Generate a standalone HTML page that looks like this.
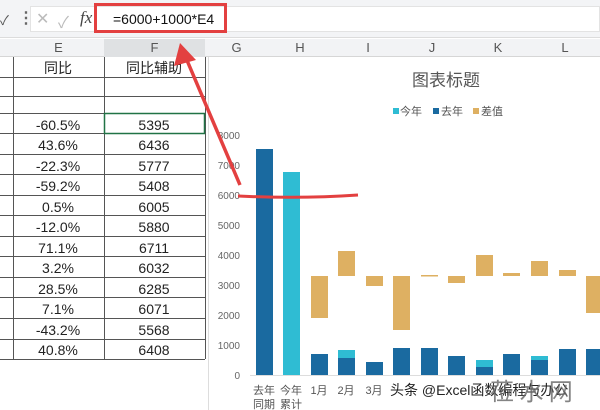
<!DOCTYPE html><html><head><meta charset="utf-8"><style>
*{margin:0;padding:0;box-sizing:border-box}
body{width:600px;height:410px;overflow:hidden;background:#fff;position:relative;font-family:"Liberation Sans","Noto Sans CJK SC",sans-serif}
.a{position:absolute}
.cell{position:absolute;text-align:center;font-size:14px;color:#222;line-height:20px}
</style></head><body>
<div class="a" style="left:0;top:0;width:600px;height:38px;background:#f3f4f6;border-bottom:1px solid #dcdcdc"></div>
<div class="a" style="left:30px;top:6px;width:570px;height:26px;background:#fff;border:1px solid #e3e3e3"></div>
<div class="a" style="left:0;top:10px;font-size:13px;color:#555">✓</div>
<div class="a" style="left:18px;top:8px;font-size:16px;color:#666;font-weight:bold">⋮</div>
<div class="a" style="left:36px;top:9px;font-size:16px;color:#bbb">✕</div>
<div class="a" style="left:58px;top:9px;font-size:16px;color:#bbb">✓</div>
<div class="a" style="left:80px;top:8px;font-size:17px;color:#444;font-style:italic;font-family:'Liberation Serif',serif">fx</div>
<div class="a" style="left:113px;top:11px;font-size:14px;color:#111">=6000+1000*E4</div>
<div class="a" style="left:94px;top:3px;width:133px;height:30px;border:3px solid #e34040"></div>
<!-- headers -->
<div class="a" style="left:0;top:39px;width:600px;height:18px;background:#f2f3f5;border-bottom:1px solid #d6d6d6"></div>
<div class="a" style="left:104px;top:39px;width:101px;height:18px;background:#dfe1e3"></div>
<div class="cell" style="left:13px;top:38px;width:91px;color:#555;font-size:13px">E</div>
<div class="cell" style="left:104px;top:38px;width:101px;color:#555;font-size:13px">F</div>
<div class="cell" style="left:205px;top:38px;width:63px;color:#555;font-size:13px">G</div>
<div class="cell" style="left:268px;top:38px;width:64px;color:#555;font-size:13px">H</div>
<div class="cell" style="left:336px;top:38px;width:64px;color:#555;font-size:13px">I</div>
<div class="cell" style="left:400px;top:38px;width:64px;color:#555;font-size:13px">J</div>
<div class="cell" style="left:466px;top:38px;width:64px;color:#555;font-size:13px">K</div>
<div class="cell" style="left:533px;top:38px;width:64px;color:#555;font-size:13px">L</div>
<!-- grid -->
<div class="a" style="left:13px;top:57px;width:1px;height:302px;background:#555"></div>
<div class="a" style="left:104px;top:57px;width:1px;height:302px;background:#555"></div>
<div class="a" style="left:205px;top:57px;width:1px;height:302px;background:#555"></div>
<div class="a" style="left:208px;top:57px;width:1px;height:353px;background:#ddd"></div>
<div id="rows"></div>
<svg class="a" style="left:0;top:0" width="600" height="410">
<g stroke="#555" stroke-width="1">
<line x1="0" x2="205" y1="77.5" y2="77.5"/><line x1="0" x2="205" y1="96.5" y2="96.5"/>
<line x1="0" x2="205" y1="113.5" y2="113.5"/><line x1="0" x2="205" y1="133.5" y2="133.5"/>
<line x1="0" x2="205" y1="154.5" y2="154.5"/><line x1="0" x2="205" y1="174.5" y2="174.5"/>
<line x1="0" x2="205" y1="195.5" y2="195.5"/><line x1="0" x2="205" y1="215.5" y2="215.5"/>
<line x1="0" x2="205" y1="236.5" y2="236.5"/><line x1="0" x2="205" y1="256.5" y2="256.5"/>
<line x1="0" x2="205" y1="277.5" y2="277.5"/><line x1="0" x2="205" y1="297.5" y2="297.5"/>
<line x1="0" x2="205" y1="318.5" y2="318.5"/><line x1="0" x2="205" y1="339.5" y2="339.5"/>
<line x1="0" x2="205" y1="359.5" y2="359.5"/>
</g>
<rect x="104.5" y="113.5" width="100" height="20" fill="none" stroke="#217346" stroke-width="1.5"/>
<g font-size="14" fill="#222" text-anchor="middle" font-family="Liberation Sans,Noto Sans CJK SC,sans-serif">
<text x="58" y="73">同比</text><text x="154" y="73">同比辅助</text>
<text x="58" y="130">-60.5%</text><text x="154" y="130">5395</text>
<text x="58" y="150">43.6%</text><text x="154" y="150">6436</text>
<text x="58" y="171">-22.3%</text><text x="154" y="171">5777</text>
<text x="58" y="191">-59.2%</text><text x="154" y="191">5408</text>
<text x="58" y="212">0.5%</text><text x="154" y="212">6005</text>
<text x="58" y="232">-12.0%</text><text x="154" y="232">5880</text>
<text x="58" y="253">71.1%</text><text x="154" y="253">6711</text>
<text x="58" y="273">3.2%</text><text x="154" y="273">6032</text>
<text x="58" y="294">28.5%</text><text x="154" y="294">6285</text>
<text x="58" y="314">7.1%</text><text x="154" y="314">6071</text>
<text x="58" y="335">-43.2%</text><text x="154" y="335">5568</text>
<text x="58" y="355">40.8%</text><text x="154" y="355">6408</text>
</g>
<!-- chart -->
<text x="446" y="86" font-size="17" fill="#555" text-anchor="middle" font-family="Liberation Sans,Noto Sans CJK SC,sans-serif">图表标题</text>
<g font-size="11" fill="#555" font-family="Liberation Sans,Noto Sans CJK SC,sans-serif">
<rect x="393" y="108" width="6" height="6" fill="#2fbcd3"/><text x="400" y="115">今年</text>
<rect x="433" y="108" width="6" height="6" fill="#1a6aa0"/><text x="441" y="115">去年</text>
<rect x="473" y="108" width="6" height="6" fill="#deb062"/><text x="481" y="115">差值</text>
</g>
<g font-size="10" fill="#666" text-anchor="end" font-family="Liberation Sans,sans-serif">
<text x="240" y="139">8000</text><text x="240" y="169">7000</text><text x="240" y="199">6000</text>
<text x="240" y="229">5000</text><text x="240" y="259">4000</text><text x="240" y="289">3000</text>
<text x="240" y="319">2000</text><text x="240" y="349">1000</text><text x="240" y="379">0</text>
</g>
<line x1="250" x2="600" y1="375.5" y2="375.5" stroke="#ddd"/>
<g fill="#1a6aa0">
<rect x="256" y="149" width="17" height="226"/>
<rect x="311" y="354" width="17" height="21"/>
<rect x="338" y="358" width="17" height="17"/>
<rect x="366" y="362" width="17" height="13"/>
<rect x="393" y="348" width="17" height="27"/>
<rect x="421" y="348" width="17" height="27"/>
<rect x="448" y="356" width="17" height="19"/>
<rect x="476" y="367" width="17" height="8"/>
<rect x="503" y="354" width="17" height="21"/>
<rect x="531" y="360" width="17" height="15"/>
<rect x="559" y="349" width="17" height="26"/>
<rect x="586" y="349" width="14" height="26"/>
</g>
<g fill="#2fbcd3">
<rect x="283" y="172" width="17" height="203"/>
<rect x="338" y="350" width="17" height="8"/>
<rect x="476" y="360" width="17" height="7"/>
<rect x="531" y="356" width="17" height="4"/>
</g>
<g fill="#deb062">
<rect x="311" y="276" width="17" height="42"/>
<rect x="338" y="251" width="17" height="25"/>
<rect x="366" y="276" width="17" height="10"/>
<rect x="393" y="276" width="17" height="54"/>
<rect x="421" y="275" width="17" height="1.5"/>
<rect x="448" y="276" width="17" height="7"/>
<rect x="476" y="255" width="17" height="21"/>
<rect x="503" y="273" width="17" height="3"/>
<rect x="531" y="261" width="17" height="15"/>
<rect x="559" y="270" width="17" height="6"/>
<rect x="586" y="276" width="14" height="37"/>
</g>
<g font-size="11" fill="#555" text-anchor="middle" font-family="Liberation Sans,Noto Sans CJK SC,sans-serif">
<text x="264" y="394">去年</text><text x="264" y="408">同期</text>
<text x="291" y="394">今年</text><text x="291" y="408">累计</text>
<text x="319" y="394">1月</text><text x="346" y="394">2月</text><text x="374" y="394">3月</text>
</g>
<text x="390" y="395" font-size="14" fill="#222" font-family="Liberation Sans,Noto Sans CJK SC,sans-serif">头条 @Excel函数编程与办公</text>
<text x="490" y="400" font-size="24" fill="#666" opacity="0.8" font-family="Noto Sans CJK SC,sans-serif">莅 水 网</text>
<!-- red annotations -->
<path d="M238 196 Q300 199 358 195" stroke="#e34040" stroke-width="3" fill="none"/>
<path d="M240 185 L186 58" stroke="#e34040" stroke-width="3.5" fill="none"/>
<path d="M180 43 L174 66 L196 60 Z" fill="#e34040"/>
</svg>
</body></html>
